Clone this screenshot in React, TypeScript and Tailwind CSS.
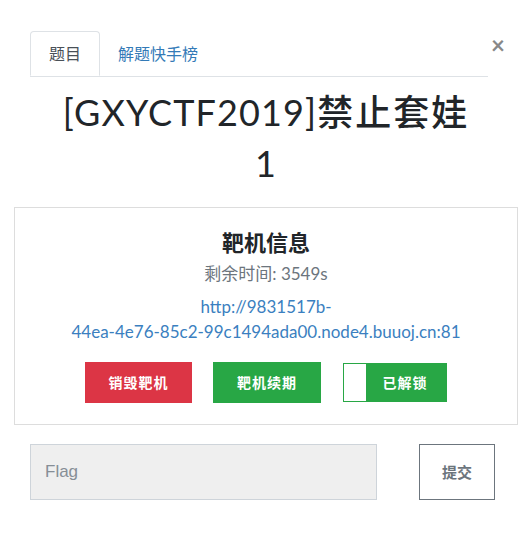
export default function App() {
  return (
    <div className="w-[532px] h-[540px] bg-white font-['Lato','Noto_Sans_CJK_SC',sans-serif] text-[#212529]">
      <div className="flex items-start pt-[31px] pl-[30px]">
        <ul className="flex w-[458px] border-b border-[#dee2e6]">
          <li className="-mb-px px-[18px] h-[45px] flex items-center border border-[#dee2e6] border-b-white rounded-t-[4px] text-[16px] text-[#495057] bg-white">
            题目
          </li>
          <li className="px-[18px] h-[45px] flex items-center text-[16px] text-[#337ab7]">解题快手榜</li>
        </ul>
        <button className="ml-[2px] mt-[2px] w-[16px] text-[24px] leading-[24px] font-bold text-[#888]">×</button>
      </div>

      <h3 className="mt-[10px] text-center text-[36px] leading-[51px] font-normal px-[50px] tracking-[1.1px]">
        [GXYCTF2019]<span className="font-medium tracking-[2px]">禁止套娃</span> 1
      </h3>

      <div className="mx-[14px] mt-[18px] h-[218px] border border-[#dddddd] flex flex-col items-center pt-[20px]">
        <h4 className="text-[22px] leading-[30px] font-bold">靶机信息</h4>
        <p className="mt-[4px] text-[17px] leading-[24px] text-[#6c757d]">剩余时间: 3549s</p>
        <a className="mt-[8px] text-[17px] leading-[25px] text-[#3b7fc0] text-center">
          http://9831517b-
          <br />
          44ea-4e76-85c2-99c1494ada00.node4.buuoj.cn:81
        </a>
        <div className="mt-[18px] flex items-center gap-[21px]">
          <button className="w-[107px] h-[41px] bg-[#dc3545] text-white text-[14px] font-bold tracking-[1px]">销毁靶机</button>
          <button className="w-[108px] h-[41px] bg-[#28a745] text-white text-[14px] font-bold tracking-[1px]">靶机续期</button>
          <button className="ml-px w-[104px] h-[39px] border border-[#28a745] flex">
            <span className="w-[22px] h-full bg-white" />
            <span className="flex-1 h-full bg-[#28a745] text-white text-[14px] font-bold tracking-[1px] flex items-center justify-center pr-[2px]">
              已解锁
            </span>
          </button>
        </div>
      </div>

      <div className="mt-[19px] ml-[30px] flex items-center">
        <input
          placeholder="Flag"
          className="w-[347px] h-[56px] bg-[#efefef] border border-[#ced4da] px-[14px] text-[17px] placeholder:text-[#868e96] font-['Liberation_Sans',sans-serif] outline-none"
        />
        <button className="ml-[42px] w-[76px] h-[56px] border border-[#6c757d] text-[#6c757d] text-[15px] font-bold">提交</button>
      </div>
    </div>
  );
}
